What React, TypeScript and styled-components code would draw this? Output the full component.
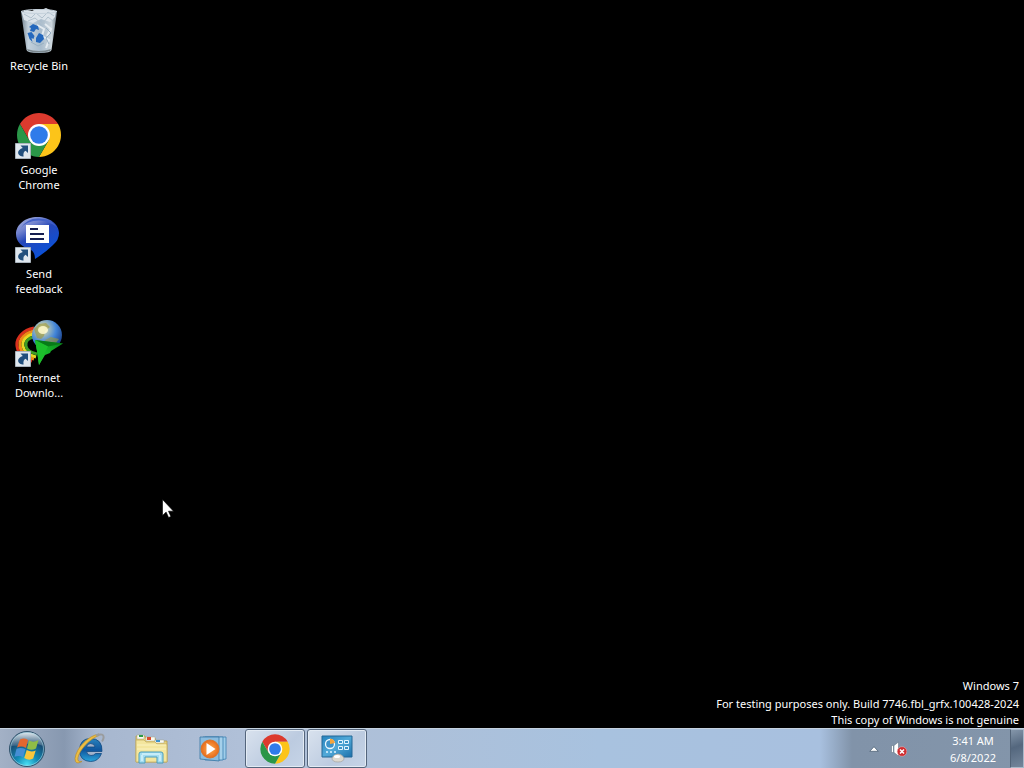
import type { ReactNode } from "react";
import styled, { createGlobalStyle } from "styled-components";

const App = () => {
  return (
    <Screen>
      <GlobalStyle />
      <Desktop>
        <Shortcuts>
          <Shortcut label="Recycle Bin" icon={<RecycleBinIcon />} />
          <Shortcut label="Google Chrome" icon={<ChromeIcon size={48} />} linked />
          <Shortcut label="Send feedback" icon={<FeedbackIcon />} linked />
          <Shortcut label="Internet Downlo..." icon={<DownloaderIcon />} linked />
        </Shortcuts>
        <Watermark>
          <Edition>Windows 7</Edition>
          <p>For testing purposes only. Build 7746.fbl_grfx.100428-2024</p>
          <p>This copy of Windows is not genuine</p>
        </Watermark>
        <Cursor viewBox="0 0 12 19" aria-hidden="true">
          <path
            d="M.5.5v16l3.6-3.4 2.5 5.4 2.3-1-2.4-5.3h5z"
            fill="#fff"
            stroke="#000"
            strokeWidth=".6"
          />
        </Cursor>
      </Desktop>

      <Taskbar>
        <StartButton aria-label="Start">
          <StartIcon />
        </StartButton>
        <TaskList>
          <TaskButton aria-label="Internet Explorer">
            <ExplorerIcon />
          </TaskButton>
          <TaskButton aria-label="Windows Explorer">
            <FolderIcon />
          </TaskButton>
          <TaskButton aria-label="Windows Media Player">
            <PlayerIcon />
          </TaskButton>
          <TaskButton aria-label="Google Chrome" $open>
            <ChromeIcon size={32} />
          </TaskButton>
          <TaskButton aria-label="Control Panel" $open>
            <ControlPanelIcon />
          </TaskButton>
        </TaskList>
        <Tray>
          <TrayButton aria-label="Show hidden icons">
            <svg width="10" height="6" viewBox="0 0 10 6">
              <path d="M5 .7 9.2 5.3H.8z" fill="#fff" stroke="#44576c" strokeWidth=".7" />
            </svg>
          </TrayButton>
          <TrayButton aria-label="Volume muted">
            <VolumeIcon />
          </TrayButton>
        </Tray>
        <Clock>
          3:41 AM
          <br />
          6/8/2022
        </Clock>
        <ShowDesktop aria-label="Show desktop" />
      </Taskbar>
    </Screen>
  );
};

export default App;

type ShortcutProps = {
  label: string;
  icon: ReactNode;
  linked?: boolean;
};

const Shortcut = ({ label, icon, linked }: ShortcutProps) => (
  <ShortcutButton>
    <ShortcutIcon>
      {icon}
      {linked && (
        <LinkBadge viewBox="0 0 16 16" aria-hidden="true">
          <path d="M.5.5h15v15H.5z" fill="#dfe7ee" stroke="#aab4bd" />
          <path
            d="M5.500 2.500H13v7.500l-2.400-2.300C8.800 8.600 8 10.500 8.600 13.500 5.800 13.500 3.200 12.200 3.100 9.800 3 7.500 5 5.700 7.800 4.900z"
            fill="#214f7d"
          />
        </LinkBadge>
      )}
    </ShortcutIcon>
    <ShortcutLabel>{label}</ShortcutLabel>
  </ShortcutButton>
);

// icons
const ChromeIcon = ({ size }: { size: number }) => (
  <svg width={size} height={size} viewBox="0 0 48 48">
    <path d="M4.950 13A22 22 0 0 1 43.050 13H24L14.470 29.500z" fill="#dc3a2e" />
    <path d="M43.050 13A22 22 0 0 1 24 46L33.530 29.500 24 13z" fill="#fcc419" />
    <path d="M24 46A22 22 0 0 1 4.950 13L14.470 29.500h19.060z" fill="#2a9648" />
    <circle cx="24" cy="24" r="11" fill="#fff" />
    <circle cx="24" cy="24" r="8.8" fill="#2f7bea" />
  </svg>
);

const RecycleBinIcon = () => (
  <svg width="48" height="48" viewBox="0 0 48 48">
    <defs>
      <linearGradient id="bin" x1="0" x2="1">
        <stop offset="0" stopColor="#74838f" />
        <stop offset=".2" stopColor="#c3d1dc" />
        <stop offset=".55" stopColor="#a9bccc" />
        <stop offset=".85" stopColor="#ccd6dd" />
        <stop offset="1" stopColor="#66737d" />
      </linearGradient>
    </defs>
    <path d="M6 5 11.500 43q.500 3 12.500 3t12.500-3L42 5q-18 4-36 0z" fill="url(#bin)" />
    <path d="M6.500 5 12 3l5 1 4-2 5 1 5-2 4 2 6 1-1 6-5 5-9-3-8 4-9-3z" fill="#dbe3ea" />
    <path d="m9 7 7 4 5-5 6 5 6-6 6 4M13 14l7-3 7 6 6-7 5 4" fill="none" stroke="#b1c1cd" />
    <path d="m22 18 7 4-2 7 7 4-3 8M30 17l6 5-4 7" fill="none" stroke="#e4ebf0" strokeWidth="2" />
    <path d="m31 21 5 5-5 5 3 6M16 35l7 4 6-3" fill="none" stroke="#98b0c2" />
    <path d="M12 42q12 4 24 0l-1 2q-11 3-22 0z" fill="#7b878d" />
    <path d="M6 4.500q4-2 18-2t18 2q-3 2-18 2t-18-2z" fill="none" stroke="#c6d2dc" />
    <path
      d="m14 20 4-3 5 2 1 4-3-1-2 3-4-1 1-3zM12.500 26l4-1 3 4-1 3-2-1 1 4-3-3zM21 31l3-5 4 2 1 4-4 4-4-1z"
      fill="#2468bd"
    />
  </svg>
);

const FeedbackIcon = () => (
  <svg width="48" height="48" viewBox="0 0 48 48">
    <defs>
      <linearGradient id="bubble" x1="0" y1="0" x2=".6" y2="1">
        <stop offset="0" stopColor="#aeb8e0" />
        <stop offset=".3" stopColor="#7182ce" />
        <stop offset=".5" stopColor="#2647b8" />
        <stop offset="1" stopColor="#0752dd" />
      </linearGradient>
    </defs>
    <path
      d="M22.500 2C10.500 2 1 9.500 1 19c0 7 5 12.500 13 15q6 2 6 10 11-7 18-14 6-5 6-12C44 9 34.500 2 22.500 2z"
      fill="url(#bubble)"
    />
    <path d="M6 13Q12 3 24 3.500q13 .5 18 9-6-6-18-7Q12 5.500 6 13z" fill="#4462c8" />
    <path d="M11 10h23v18H11z" fill="#fff" />
    <path d="M15 14h8M15 19h14M15 24h14" stroke="#151d50" strokeWidth="2" />
  </svg>
);

const DownloaderIcon = () => (
  <svg width="48" height="48" viewBox="0 0 48 48">
    <defs>
      <radialGradient id="globe" cx=".35" cy=".3" r=".75">
        <stop offset="0" stopColor="#fffbc9" />
        <stop offset=".25" stopColor="#a9bfb8" />
        <stop offset=".6" stopColor="#4285d8" />
        <stop offset="1" stopColor="#1c4088" />
      </radialGradient>
      <linearGradient id="arrow" x1="1" y1="0" x2="0" y2="1">
        <stop offset="0" stopColor="#0a7d1a" />
        <stop offset=".5" stopColor="#16b528" />
        <stop offset="1" stopColor="#2fd035" />
      </linearGradient>
    </defs>
    <g fill="none">
      <path d="M19 9C8 11 1 19 2 27S8 40 17 42" stroke="#d9301d" strokeWidth="3" />
      <path d="M19 12C10 14 4 20 5 27S11 38 19 40" stroke="#f08a18" strokeWidth="3" />
      <path d="M19 15C12 16 7 21 8 27S14 36 21 38" stroke="#e6d823" strokeWidth="3" />
      <path d="M19 18C14 19 10 22 11 27S16 33 22 35" stroke="#3f9c25" strokeWidth="3" />
    </g>
    <circle cx="32" cy="16" r="15" fill="url(#globe)" />
    <path d="m19 10 5-5 7-1 4 4-5 4-1 5-3 3-4-1-2-6zM30 21l6-3 8 2-4 5-8 2z" fill="#a09a35" opacity=".6" />
    <ellipse cx="28" cy="11" rx="5" ry="4" fill="#fffbd1" opacity=".85" />
    <path d="m20 21 28 3.500L36 32l-1 2-5 2-6 10-2-14z" fill="url(#arrow)" />
    <path d="m20 21 28 3.500-15 3z" fill="#087a18" />
    <path d="m20 21 13 6.500L24 46l-2-14z" fill="#1cbf2c" />
  </svg>
);

const StartIcon = () => (
  <svg width="38" height="38" viewBox="0 0 38 38">
    <defs>
      <radialGradient id="orb" cx=".5" cy=".95" r=".9">
        <stop offset="0" stopColor="#49e0f5" />
        <stop offset=".35" stopColor="#128bb5" />
        <stop offset=".75" stopColor="#174d75" />
        <stop offset="1" stopColor="#547591" />
      </radialGradient>
      <linearGradient id="shine" x1="0" y1="0" x2="0" y2="1">
        <stop offset="0" stopColor="#dfe8ee" />
        <stop offset="1" stopColor="#8599aa" stopOpacity=".3" />
      </linearGradient>
    </defs>
    <circle cx="19" cy="19" r="17.500" fill="url(#orb)" stroke="#31536c" />
    <path d="M3 16Q5 3 19 2.500T35 16Q27 12 19 14T3 16z" fill="url(#shine)" />
    <path d="M12 9.500q4-2 8 .5l-2 8q-4.500-2.500-9-.5z" fill="#e3672f" />
    <path d="M21 10.500q4.500 2.500 9.500-.5l-2.500 8.500q-4.500 2.500-9 0z" fill="#8fbd46" />
    <path d="M8.500 18.800q4.500-2 9 .5l-2.500 8q-4-2.500-8.500-.5z" fill="#458ed4" />
    <path d="M18.700 20q4.500 2.500 9 .5l-2.500 8q-4 2.500-9-.5z" fill="#fac63b" />
    <circle cx="19" cy="19" r="16.500" fill="none" stroke="#a6d6e5" strokeOpacity=".6" />
  </svg>
);

const ExplorerIcon = () => (
  <svg width="32" height="32" viewBox="0 0 32 32">
    <defs>
      <linearGradient id="ie" x1="0" y1="0" x2="0" y2="1">
        <stop offset="0" stopColor="#2a83bd" />
        <stop offset=".5" stopColor="#0f559d" />
        <stop offset="1" stopColor="#2ba6dc" />
      </linearGradient>
    </defs>
    <path
      d="M29 18.500H13.500Q14 22.500 18 22.500q3 0 4.500-2H28.500Q25.500 28.500 17.500 28.500 6.500 28 6.500 17 7 5.500 17.500 5.500 29.500 5.500 29 18.500zM13.500 14h8.500Q21.500 10.500 17.700 10.500T13.500 14z"
      fill="url(#ie)"
      stroke="#134a82"
      strokeWidth=".8"
    />
    <path
      d="M26 2.500C17 5.500 6.500 17 5 24.500q-1 5 4 4-7 4-7-3C3.500 14 16 2.500 26 1z"
      fill="#edbd42"
      stroke="#b38c34"
      strokeWidth=".7"
    />
    <path d="M23 2.200q8.500-2.500 7.500 2.800-.3 2-1.500 3.500" fill="none" stroke="#9a9c9e" strokeWidth="2" />
  </svg>
);

const FolderIcon = () => (
  <svg width="34" height="32" viewBox="0 0 34 32">
    <path d="M2 3h9l1 2h9l1 3h11v21H2z" fill="#e6d27e" stroke="#b69d4e" strokeWidth=".8" />
    <path d="M3 2h7v4H3zM12 4h9v4h-9zM21 7h9v3h-9z" fill="#fafbf4" stroke="#a7a689" strokeWidth=".5" />
    <path d="M5 2h4v2H5z" fill="#2b9b46" />
    <path d="M13 4h4v3h-4z" fill="#dc4c2c" />
    <path d="M22 7h4v2h-4z" fill="#3d91cb" />
    <path d="M2 7h8l2 2h9l2 2h10v18H2z" fill="#f3e69e" stroke="#c6ae61" strokeWidth=".8" />
    <path d="M3 12h29M3 16h29" stroke="#fbf3c0" />
    <path
      d="M5 30V21q0-2 2-2h20q2 0 2 2v9h-6v-6H11v6z"
      fill="#a3dcef"
      stroke="#4a9dbb"
    />
    <path d="M8 21h18M8 22v6M26 22v6" stroke="#d3f2fb" strokeWidth="1.500" />
  </svg>
);

const PlayerIcon = () => (
  <svg width="30" height="28" viewBox="0 0 30 28">
    <defs>
      <radialGradient id="play">
        <stop offset="0" stopColor="#ffaf55" />
        <stop offset="1" stopColor="#e76a19" />
      </radialGradient>
    </defs>
    <path d="M7 2h21v22l-7 1z" fill="#9fcdea" stroke="#3c82b1" strokeWidth=".8" />
    <path d="M5 2h20v23H7z" fill="#a5d0ea" stroke="#3c82b1" strokeWidth=".8" />
    <path d="M2 2h19v24L2 24z" fill="#8bbde0" stroke="#3777a5" strokeWidth=".8" />
    <circle cx="12" cy="14" r="9" fill="url(#play)" stroke="#d8752d" />
    <path d="m8.500 8 9 6-9 6z" fill="#fff" />
  </svg>
);

const ControlPanelIcon = () => (
  <svg width="32" height="30" viewBox="0 0 32 30">
    <defs>
      <linearGradient id="panel" x1="0" y1="0" x2="1" y2="1">
        <stop offset="0" stopColor="#2583be" />
        <stop offset=".5" stopColor="#51a9d8" />
        <stop offset="1" stopColor="#1d70aa" />
      </linearGradient>
    </defs>
    <path d="M1 2h30v21H1z" fill="url(#panel)" stroke="#246897" />
    <circle cx="9" cy="10" r="4.500" fill="#3d92c8" stroke="#ecf8ff" strokeWidth="1.300" />
    <path d="M9 10V4.500A5.500 5.500 0 0 1 14 9z" fill="#f6a43b" />
    <path
      d="M17.500 6.500h4v3h-4zM23.500 6.500h4v3h-4zM17.500 12.500h4v3h-4zM23.500 12.500h4v3h-4z"
      fill="#3b93c6"
      stroke="#e2f4ff"
    />
    <path d="M5 18h2M9 18h2M13 18h2" stroke="#dff4ff" strokeWidth="1.500" />
    <path d="M11 24q2-4 6-4t6 4q0 4-6 4t-6-4z" fill="#ddd9d0" stroke="#a5a49e" strokeWidth=".7" />
    <ellipse cx="16" cy="22.500" rx="3" ry="1.500" fill="#fff" />
  </svg>
);

const VolumeIcon = () => (
  <svg width="16" height="16" viewBox="0 0 16 16">
    <path d="M.5 4.500h2v7h-2z" fill="#fff" stroke="#56687a" strokeWidth=".5" />
    <path d="M3 4.500 7.500 1v14L3 11.500z" fill="#fff" stroke="#56687a" strokeWidth=".5" />
    <circle cx="11" cy="10.500" r="4.800" fill="#cf2d30" stroke="#efbdbf" strokeWidth=".5" />
    <path d="m9 8.500 4 4m0-4-4 4" stroke="#fff" strokeWidth="1.500" />
  </svg>
);

const GlobalStyle = createGlobalStyle`
  body {
    margin: 0;
    background: #000;
    font-family: "Noto Sans", "Open Sans", sans-serif;
    font-size: 11px;
  }

  button {
    padding: 0;
    border: 0;
    background: none;
    color: inherit;
    font: inherit;
  }

  svg {
    display: block;
  }
`;

const Screen = styled.div`
  min-height: 100vh;
  display: flex;
  flex-direction: column;
`;

const Desktop = styled.main`
  flex: 1;
  display: flex;
  justify-content: space-between;
  position: relative;
  color: #fff;
`;

const Shortcuts = styled.div`
  display: flex;
  flex-direction: column;
  padding: 7px 1px;
`;

const ShortcutButton = styled.button`
  width: 76px;
  height: 104px;
  display: flex;
  flex-direction: column;
  align-items: center;
  gap: 3px;
`;

const ShortcutIcon = styled.span`
  position: relative;
`;

const LinkBadge = styled.svg`
  width: 16px;
  height: 16px;
  position: absolute;
  left: 0;
  bottom: 0;
`;

const ShortcutLabel = styled.span`
  max-width: 64px;
  line-height: 15px;
  text-align: center;
`;

const Watermark = styled.div`
  align-self: flex-end;
  padding-right: 5px;
  text-align: right;
  line-height: 16px;

  & p {
    margin: 0;
  }
`;

const Edition = styled.p`
  padding-bottom: 2px;
`;

const Cursor = styled.svg`
  width: 12px;
  height: 19px;
  position: absolute;
  left: 162px;
  top: 499px;
`;

const Taskbar = styled.footer`
  height: 40px;
  box-sizing: border-box;
  border-top: 1px solid #c5d2e0;
  display: flex;
  background: linear-gradient(
    90deg,
    #a3b1c6 0,
    #8798b0 64px,
    #a7b7cf 96px,
    #b0c0d8 240px,
    #adc0d9 400px,
    #a8c2df 600px,
    #a8c0df calc(100% - 204px),
    #8193a9 calc(100% - 172px),
    #8395aa 100%
  );
`;

const StartButton = styled.button`
  width: 54px;
  display: flex;
  justify-content: center;
  align-items: center;
`;

const TaskList = styled.nav`
  flex: 1;
  display: flex;
  gap: 2px;
  padding-left: 5px;
`;

const TaskButton = styled.button<{ $open?: boolean }>`
  width: 60px;
  box-sizing: border-box;
  display: flex;
  justify-content: center;
  align-items: center;

  ${({ $open }) =>
    $open &&
    `
    border: 1px solid #54657c;
    border-radius: 3px;
    background: linear-gradient(135deg, #d9e2ee, #bccbe0 60%, #c6d4e7);
    box-shadow: inset 0 0 0 1px #e3ebf4;
  `}
`;

const Tray = styled.div`
  display: flex;
  align-items: center;
  gap: 12px;
`;

const TrayButton = styled.button`
  display: flex;
`;

const Clock = styled.time`
  width: 74px;
  margin-left: 29px;
  padding-top: 3px;
  line-height: 17px;
  text-align: center;
  color: #fff;
`;

const ShowDesktop = styled.button`
  width: 14px;
  box-sizing: border-box;
  border: 1px solid #a9b9c9;
  border-left-color: #526377;
  background: linear-gradient(160deg, #8496aa, #54677e 45%, #74869b);
`;
